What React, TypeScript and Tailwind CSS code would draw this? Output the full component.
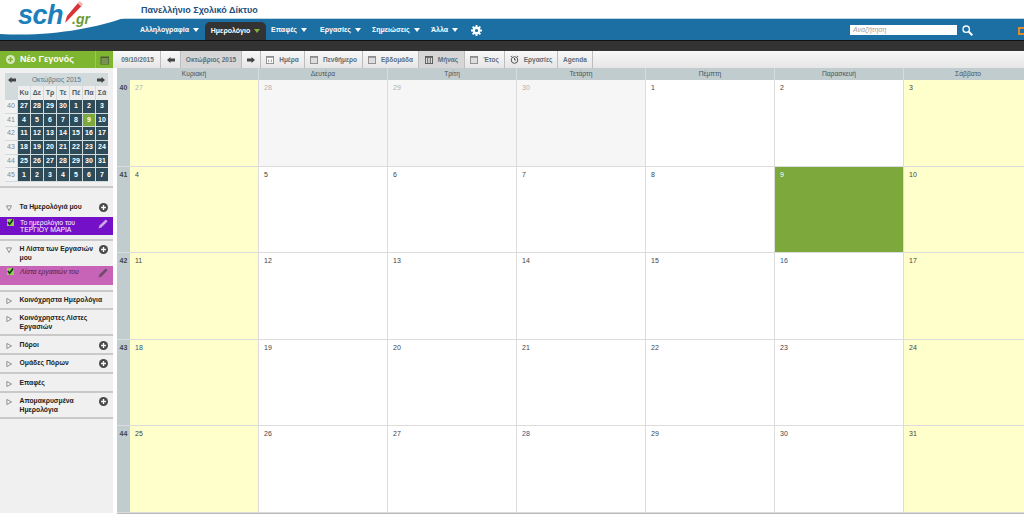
import React from "react";

const font = { fontFamily: '"Liberation Sans", Arial, sans-serif' };

function Plus() {
  return (
    <svg width="9" height="9" viewBox="0 0 10 10" className="shrink-0">
      <circle cx="5" cy="5" r="5" fill="#4a4a4a" />
      <path d="M5 2.3v5.4M2.3 5h5.4" stroke="#fff" strokeWidth="1.5" />
    </svg>
  );
}

function Tri({ open }: { open?: boolean }) {
  return (
    <svg width="6" height="6" viewBox="0 0 7 7" className="shrink-0">
      <path d={open ? "M0.5 1h6L3.5 6.5z" : "M1 0.5v6L6.5 3.5z"} fill="none" stroke="#777" strokeWidth="0.9" />
    </svg>
  );
}

function Check() {
  return (
    <svg width="7" height="7" viewBox="0 0 8 8" className="shrink-0">
      <rect width="8" height="8" fill="#8fcf5a" />
      <path d="M1 3.500l2 2.400L7 0.500" stroke="#10300c" strokeWidth="1.800" fill="none" />
    </svg>
  );
}

function Pencil({ c }: { c: string }) {
  return (
    <svg width="10" height="10" viewBox="0 0 10 10" className="shrink-0">
      <path d="M0.5 9.5l1-3L7.8 0.4l1.8 1.8L3.4 8.500z" fill={c} />
    </svg>
  );
}

function Caret({ c = "#fff" }: { c?: string }) {
  return <span className="inline-block w-0 h-0 border-l-[3px] border-r-[3px] border-t-[4px] border-l-transparent border-r-transparent ml-[4px] align-middle" style={{ borderTopColor: c }} />;
}

function Header() {
  const items: [string, number][] = [
    ["Αλληλογραφία", 140],
    ["Επαφές", 271],
    ["Εργασίες", 320],
    ["Σημειώσεις", 372],
    ["Άλλα", 431],
  ];
  return (
    <div className="relative h-[51px] shrink-0 bg-white overflow-hidden">
      <div className="absolute left-0 right-0 top-[18px] h-[22px] bg-[#1c6fa3] border-t border-[#bcd6e4]" />
      <div className="absolute left-0 right-0 top-[40px] h-[11px] bg-[#333333] border-t border-[#111]" />
      <svg className="absolute left-0 top-[16px]" width="140" height="26" viewBox="0 0 140 26">
        <path d="M0 18C50 21 95 12 124 2L140 2V0H0Z" fill="#fff" />
      </svg>
      <div className="absolute left-[18px] top-[2px] text-[#1c80bd] italic font-bold text-[27px] leading-[27px] tracking-[-0.500px]">sch</div>
      <svg className="absolute left-[62px] top-[0px]" width="22" height="24" viewBox="0 0 22 24">
        <path d="M3 23L5 16 16 3l3.500 3L7 19z" fill="#d9343a" />
        <path d="M15.500 3.500l4 3 1.500-2.500L17.500 1z" fill="#f2b7b0" />
      </svg>
      <div className="absolute left-[72px] top-[11px] text-[#6e9a34] italic font-bold text-[14px] leading-[16px]">.gr</div>
      <div className="absolute left-[141px] top-[4px] text-[#1d4f7c] font-bold text-[9px] leading-[12px]">Πανελλήνιο Σχολικό Δίκτυο</div>
      {items.map(([t, x]) => (
        <div key={t} className="absolute top-[25px] text-white font-bold text-[7px] leading-[10px] whitespace-nowrap" style={{ left: x }}>
          {t}
          <Caret />
        </div>
      ))}
      <div className="absolute left-[205px] top-[22px] w-[61px] h-[18px] bg-[#333333] rounded-t-[5px] flex items-center justify-center text-white font-bold text-[7px]">
        Ημερολόγιο
        <Caret c="#7fb23c" />
      </div>
      <svg className="absolute left-[471px] top-[25px]" width="11" height="11" viewBox="0 0 24 24" fill="none" stroke="#fff" strokeWidth="5">
        <circle cx="12" cy="12" r="6" />
        <path d="M12 0v5M12 19v5M0 12h5M19 12h5M3.5 3.5l3.5 3.5M17 17l3.5 3.5M3.5 20.5L7 17M17 7l3.5-3.5" strokeWidth="4" />
      </svg>
      <div className="absolute left-[850px] top-[25px] w-[107px] h-[10px] bg-white text-[#a0a0a0] italic text-[7px] leading-[10px] pl-[3px]">Αναζήτηση</div>
      <svg className="absolute left-[962px] top-[25px]" width="11" height="11" viewBox="0 0 11 11" fill="none" stroke="#fff">
        <circle cx="4.2" cy="4.2" r="3.2" strokeWidth="1.3" />
        <path d="M6.8 6.8L10.3 10.3" strokeWidth="2" />
      </svg>
      <div className="absolute left-[1018px] top-[27px] w-[8px] h-[8px] border-2 border-[#e08a2c]" />
    </div>
  );
}

const miniRows = [
  [40, 27, 28, 29, 30, 1, 2, 3],
  [41, 4, 5, 6, 7, 8, 9, 10],
  [42, 11, 12, 13, 14, 15, 16, 17],
  [43, 18, 19, 20, 21, 22, 23, 24],
  [44, 25, 26, 27, 28, 29, 30, 31],
  [45, 1, 2, 3, 4, 5, 6, 7],
];

function MiniCal() {
  return (
    <div className="ml-[5px] mt-[5px] w-[103px] bg-[#d3dadc] text-[7px]">
      <div className="h-[13px] flex items-center justify-between px-[3px]">
        <svg width="8" height="6" viewBox="0 0 8 6"><path d="M0 3l3.5-3v1.600H8v2.800H3.500V6z" fill="#444" /></svg>
        <span className="text-[#5c7480] text-[6.700px] leading-[10px]">Οκτώβριος 2015</span>
        <svg width="8" height="6" viewBox="0 0 8 6"><path d="M8 3L4.500 0v1.600H0v2.800h4.500V6z" fill="#444" /></svg>
      </div>
      <div className="grid grid-cols-[12px_repeat(7,1fr)] gap-x-px">
        <div className="h-[14px]" />
        {["Κυ", "Δε", "Τρ", "Τε", "Πέ", "Πα", "Σά"].map((d) => (
          <div key={d} className="h-[14px] bg-[#eeeeee] flex items-center justify-center text-[#4a5a64] font-bold">{d}</div>
        ))}
        {miniRows.map((r) =>
          r.map((v, i) => {
            const today = r[0] === 41 && v === 9;
            if (i === 0)
              return <div key={i + "-" + r[0]} className="h-[12.700px] bg-[#f2f2f2] mb-px flex items-center justify-center text-[#888]">{v}</div>;
            return (
              <div
                key={i + "-" + r[0]}
                className={"h-[12.700px] mb-px flex items-center justify-center font-bold text-white " + (today ? "bg-[#7ca83c]" : "bg-[#2e4b5a]")}
              >
                {v}
              </div>
            );
          })
        )}
      </div>
    </div>
  );
}

function Section({ title, open, plus, h, top = 4, children }: { title: React.ReactNode; open?: boolean; plus?: boolean; h: number; top?: number; children?: React.ReactNode }) {
  return (
    <div className="border-b-2 border-[#c9c9c9] shrink-0" style={{ height: h }}>
      <div className="flex items-start pl-[6px] pr-[5px] gap-[7.500px]" style={{ paddingTop: top }}>
        <div className="pt-[1.500px]"><Tri open={open} /></div>
        <div className="flex-1 min-w-0 whitespace-nowrap text-[6.800px] leading-[8.500px] font-bold text-[#222]">{title}</div>
        {plus && <Plus />}
      </div>
      {children}
    </div>
  );
}

function Sidebar() {
  return (
    <div className="w-[113px] shrink-0 bg-[#f0f0f0] flex flex-col">
      <div className="h-[17px] bg-[#7fb62f] flex items-center shrink-0">
        <svg width="9" height="9" viewBox="0 0 10 10" className="ml-[6px]">
          <circle cx="5" cy="5" r="5" fill="#d9e8c3" />
          <path d="M5 2.300v5.400M2.300 5h5.400" stroke="#7fb62f" strokeWidth="1.600" />
        </svg>
        <span className="ml-[5px] text-white font-bold text-[9px]">Νέο Γεγονός</span>
        <div className="ml-auto w-[18px] h-full border-l border-[#9cc760] flex items-center justify-center">
          <svg width="10" height="10" viewBox="0 0 10 10">
            <rect x="0.500" y="1.500" width="8.500" height="8" fill="#4c5a33" />
            <path d="M1 4h7.500M1 6h7.500M1 8h7.500M3 3v6M5 3v6M7 3v6" stroke="#a5c973" strokeWidth="0.600" />
          </svg>
        </div>
      </div>
      <div className="h-[120px] shrink-0 border-b-2 border-[#c9c9c9]">
        <MiniCal />
      </div>
      <Section open plus h={53} top={15} title="Τα Ημερολόγιά μου">
        <div className="mt-[4.500px] bg-[#7410c8] h-[18px] flex items-start pl-[7px] pr-[5px] gap-[6px] text-white text-[6.800px] leading-[7.500px] pt-[2px]">
          <Check />
          <div className="flex-1">Το ημερολόγιο του<br />ΤΕΡΓΙΟΥ ΜΑΡΙΑ</div>
          <Pencil c="#c9a8e8" />
        </div>
      </Section>
      <Section open plus h={51} title={<>Η Λίστα των Εργασιών<br />μου</>}>
        <div className="mt-[4px] bg-[#c764b8] h-[19px] flex items-start pl-[7px] pr-[5px] gap-[6px] text-[#4a1f45] italic text-[6.800px] leading-[8.500px] pt-[2px]">
          <Check />
          <div className="flex-1">Λίστα εργασιών του</div>
          <Pencil c="#6e4a69" />
        </div>
      </Section>
      <Section h={18} title="Κοινόχρηστα Ημερολόγια" />
      <Section h={26} title={<>Κοινόχρηστες Λίστες<br />Εργασιών</>} />
      <Section plus h={19} top={5} title="Πόροι" />
      <Section plus h={19} top={4} title="Ομάδες Πόρων" />
      <Section h={19} top={5} title="Επαφές" />
      <Section plus h={26} title={<>Απομακρυσμένα<br />Ημερολόγια</>} />
    </div>
  );
}

function ToolBtn({ t, w, active, icon }: { t: string; w: number; active?: boolean; icon?: React.ReactNode }) {
  return (
    <div
      className={"h-full shrink-0 flex items-center justify-center gap-[5px] border-r border-[#bdbdbd] font-bold text-[6.500px] text-[#5f6e76] " + (active ? "bg-[#d6d6d6]" : "")}
      style={{ width: w }}
    >
      {icon}
      {t}
    </div>
  );
}

function CalIcon({ dark, day }: { dark?: boolean; day?: boolean }) {
  const c = dark ? "#555" : "#8a8a8a";
  return (
    <svg width="8" height="8" viewBox="0 0 9 9" className="shrink-0">
      <rect x="0.500" y="0.500" width="8" height="8" fill={day ? "#fff" : "#ddd"} stroke={c} />
      <rect x="0.500" y="0.500" width="8" height="1.500" fill={c} />
      {dark && <path d="M3 2v6M6 2v6" stroke={c} />}
      {day && <path d="M3 4v3M6 4v3" stroke={c} />}
    </svg>
  );
}

function Toolbar() {
  return (
    <div className="h-[17px] flex shrink-0 pl-[2px] bg-gradient-to-b from-[#f8f8f8] to-[#e6e6e6]">
      <ToolBtn t="09/10/2015" w={46} />
      <ToolBtn t="" w={20} icon={<svg width="8" height="6" viewBox="0 0 8 6"><path d="M0 3l3.500-3v1.600H8v2.800H3.500V6z" fill="#444" /></svg>} />
      <ToolBtn t="Οκτώβριος 2015" w={61} active />
      <ToolBtn t="" w={19} icon={<svg width="8" height="6" viewBox="0 0 8 6"><path d="M8 3L4.500 0v1.600H0v2.800h4.500V6z" fill="#444" /></svg>} />
      <ToolBtn t="Ημέρα" w={44} icon={<CalIcon day />} />
      <ToolBtn t="Πενθήμερο" w={58} icon={<CalIcon />} />
      <ToolBtn t="Εβδομάδα" w={56} icon={<CalIcon />} />
      <ToolBtn t="Μήνας" w={46} active icon={<CalIcon dark />} />
      <ToolBtn t="Έτος" w={40} icon={<CalIcon />} />
      <ToolBtn
        t="Εργασίες"
        w={53}
        icon={
          <svg width="9" height="9" viewBox="0 0 9 9" fill="none" stroke="#555" className="shrink-0">
            <circle cx="4.500" cy="5" r="3.300" />
            <path d="M4.500 3v2h1.500M0.800 2L2 0.800M8.200 2L7 0.800" />
          </svg>
        }
      />
      <ToolBtn t="Agenda" w={35} />
    </div>
  );
}

const days = ["Κυριακή", "Δευτέρα", "Τρίτη", "Τετάρτη", "Πέμπτη", "Παρασκευή", "Σάββατο"];
const weeks: [number, number[]][] = [
  [40, [27, 28, 29, 30, 1, 2, 3]],
  [41, [4, 5, 6, 7, 8, 9, 10]],
  [42, [11, 12, 13, 14, 15, 16, 17]],
  [43, [18, 19, 20, 21, 22, 23, 24]],
  [44, [25, 26, 27, 28, 29, 30, 31]],
];

function Grid() {
  return (
    <div className="ml-[4px] flex flex-col h-[446px] w-[916px] bg-white border-b border-[#bbb]">
      <div className="h-[12px] shrink-0 grid grid-cols-[13px_repeat(7,129px)] bg-[#c1cccf]">
        <div />
        {days.map((d) => (
          <div key={d} className="flex items-center justify-center text-[6.700px] text-[#46565e] border-r border-[#d5dcde]">{d}</div>
        ))}
      </div>
      {weeks.map(([w, ds], ri) => (
        <div key={w} className="flex-1 grid grid-cols-[13px_repeat(7,129px)] border-b border-[#dcdcdc]">
          <div className="bg-[#c1cccf] pt-[3px] text-center text-[7px] font-bold text-[#444]">{w}</div>
          {ds.map((d, i) => {
            const prev = ri === 0 && i < 4;
            const weekend = i === 0 || i === 6;
            const today = ri === 1 && i === 5;
            const blue = (ri === 2 && i === 5) || (ri === 4 && i === 3) || (ri === 3 && i === 0);
            const bg = today ? "bg-[#7ca83c]" : weekend ? "bg-[#ffffcc]" : prev ? "bg-[#f6f6f6]" : "bg-white";
            const col = today ? "text-white" : prev ? "text-[#b0b0b0]" : blue ? "text-[#2a5a8a]" : "text-[#444]";
            return (
              <div key={i} className={"border-r border-[#dcdcdc] pl-[5px] pt-[3px] text-[7px] leading-[9px] " + bg + " " + col}>{d}</div>
            );
          })}
        </div>
      ))}
    </div>
  );
}

export default function App() {
  return (
    <div className="w-[1024px] h-[530px] overflow-hidden bg-white flex flex-col" style={font}>
      <Header />
      <div className="flex">
        <div className="h-[462px] flex"><Sidebar /></div>
        <div className="flex flex-col min-w-0 flex-1">
          <Toolbar />
          <Grid />
        </div>
      </div>
    </div>
  );
}
